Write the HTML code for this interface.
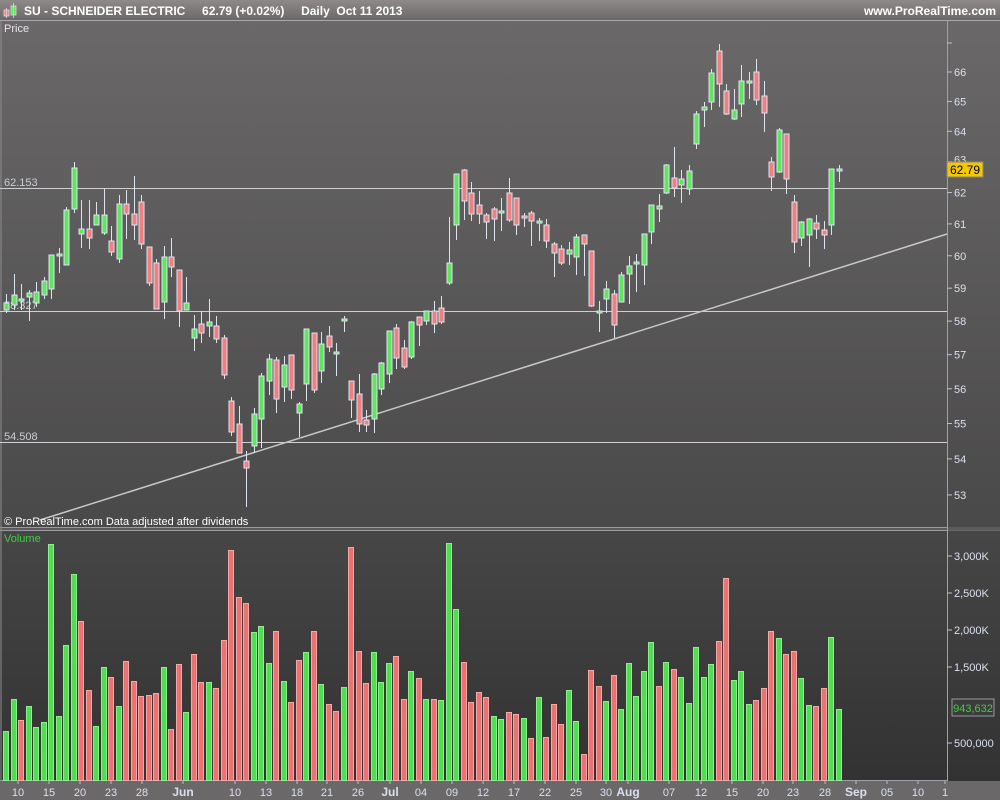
<!DOCTYPE html>
<html><head><meta charset="utf-8"><style>
html,body{margin:0;padding:0;background:#5a5858;}
svg{display:block;font-family:"Liberation Sans",sans-serif;}
</style></head><body>
<svg id="s" width="1000" height="800" xmlns="http://www.w3.org/2000/svg">
<defs>
<linearGradient id="gp" x1="0" y1="0" x2="0" y2="1"><stop offset="0" stop-color="#6a6868"/><stop offset="1" stop-color="#4a4949"/></linearGradient>
<linearGradient id="gv" x1="0" y1="0" x2="0" y2="1"><stop offset="0" stop-color="#474646"/><stop offset="1" stop-color="#333232"/></linearGradient>
<linearGradient id="gh" x1="0" y1="0" x2="0" y2="1"><stop offset="0" stop-color="#8e8a8a"/><stop offset="1" stop-color="#6c6868"/></linearGradient>
</defs>
<rect x="0" y="0" width="1000" height="800" fill="#6a6868"/>
<rect x="0" y="0" width="1000" height="20" fill="url(#gh)"/>
<line x1="0" y1="20.5" x2="1000" y2="20.5" stroke="#a8a8b0"/>
<rect x="0" y="21" width="1000" height="506" fill="url(#gp)"/>
<rect x="0" y="527" width="1000" height="3" fill="#5c5a5a"/>
<line x1="0" y1="527.5" x2="947" y2="527.5" stroke="#9a9aa0"/>
<line x1="0" y1="530.5" x2="947" y2="530.5" stroke="#9a9aa0"/>
<rect x="0" y="531" width="1000" height="250" fill="url(#gv)"/>
<rect x="0" y="781" width="1000" height="19" fill="#6a6868"/>
<line x1="0" y1="780.5" x2="947" y2="780.5" stroke="#a0a0a8"/>
<line x1="947.5" y1="21" x2="947.5" y2="781" stroke="#a0a0a8"/>
<line x1="1" y1="21" x2="1" y2="781" stroke="#8c8c90"/>
<rect x="4" y="10" width="5" height="6" fill="#f08080" stroke="#ddd" stroke-width="0.8"/>
<line x1="6.5" y1="8" x2="6.5" y2="18" stroke="#ddd" stroke-width="0.8"/>
<rect x="11" y="6" width="5" height="9" fill="#5ee65e" stroke="#ddd" stroke-width="0.8"/>
<line x1="13.5" y1="3" x2="13.5" y2="18" stroke="#ddd" stroke-width="0.8"/>
<text x="24" y="15" fill="#fff" font-size="12" font-weight="bold" xml:space="preserve">SU - SCHNEIDER ELECTRIC     62.79 (+0.02%)     Daily  Oct 11 2013</text>
<text x="996" y="15" fill="#fff" font-size="12" font-weight="bold" text-anchor="end">www.ProRealTime.com</text>
<text x="4" y="32" fill="#e6e6ea" font-size="11">Price</text>
<text x="4" y="542" fill="#44cc44" font-size="11">Volume</text>
<g id="hl" stroke="#d0d0d4" stroke-width="1"></g>
<line x1="40" y1="520" x2="947" y2="234" stroke="#c8c8c8" stroke-width="1.5"/>
<text x="4" y="186" fill="#c8ccd4" font-size="11">62.153</text>
<text x="4" y="309" fill="#c8ccd4" font-size="11">58.327</text>
<text x="4" y="440" fill="#c8ccd4" font-size="11">54.508</text>
<g id="c"></g>
<g id="v"></g>
<g id="ax" fill="#d8e0f0" font-size="11"></g>
<text x="4" y="525" fill="#fff" font-size="11">© ProRealTime.com  Data adjusted after dividends</text>
<rect x="947" y="162" width="36" height="15" fill="#f5c800" stroke="#888"/>
<text x="965" y="174" fill="#000" font-size="12" text-anchor="middle">62.79</text>
<rect x="952" y="699" width="42" height="17" fill="#3c3c3c" stroke="#999"/>
<text x="973" y="712" fill="#44cc44" font-size="11" text-anchor="middle">943,632</text>
</svg>
<script>
var NS="http://www.w3.org/2000/svg";
function el(p,t,a,txt){var e=document.createElementNS(NS,t);for(var k in a)e.setAttribute(k,a[k]);if(txt!=null)e.textContent=txt;p.appendChild(e);return e;}
var hl=document.getElementById('hl');
[188,311,442].forEach(function(y){el(hl,'line',{x1:0,y1:y+0.5,x2:947,y2:y+0.5});});
var C=[
[294,303,310,313,'g'],[274,295,305,310,'g'],[284,299,301,310,'g'],[290,293,297,321,'g'],[282,292,303,307,'g'],[277,281,295,299,'g'],
[255,255,289,299,'g'],[248,254,256,273,'g'],[207,210,265,265,'g'],[162,168,209,213,'g'],[200,229,234,248,'g'],[200,229,238,249,'r'],
[202,215,225,225,'g'],[189,215,233,235,'g'],[226,241,252,256,'r'],[195,204,259,263,'g'],[190,204,214,239,'r'],[176,214,225,240,'r'],
[195,202,244,249,'r'],[247,247,283,286,'r'],[259,263,309,309,'r'],[246,257,302,319,'g'],[238,257,267,277,'r'],[270,270,311,327,'r'],
[277,303,310,310,'g'],[315,329,338,351,'g'],[311,324,333,343,'r'],[299,322,326,337,'g'],[316,326,339,343,'r'],[335,338,375,379,'r'],
[397,401,432,436,'r'],[406,424,453,453,'r'],[451,461,468,507,'r'],[408,414,446,453,'g'],[373,376,419,448,'g'],[354,359,381,395,'g'],
[357,360,399,413,'r'],[356,365,387,402,'g'],[355,355,390,399,'r'],[402,404,413,437,'g'],[329,329,384,401,'g'],[333,333,390,393,'r'],
[332,344,371,383,'g'],[326,336,347,352,'r'],[343,352,354,376,'g'],[316,319,321,332,'g'],[381,381,400,418,'r'],[374,394,424,432,'r'],
[410,420,425,432,'r'],[373,374,419,433,'g'],[362,363,389,395,'g'],[331,331,374,383,'g'],[324,328,358,369,'r'],[340,348,367,369,'r'],
[321,322,357,359,'g'],[317,317,325,346,'r'],[311,311,321,325,'g'],[301,311,324,333,'r'],[296,308,322,324,'r'],[217,263,283,285,'g'],
[174,174,225,240,'g'],[169,170,201,220,'r'],[182,193,214,221,'r'],[191,205,214,224,'r'],[213,215,222,239,'r'],[207,209,219,241,'r'],
[198,211,213,231,'g'],[178,193,220,222,'r'],[198,198,225,235,'r'],[213,216,218,227,'r'],[211,213,221,246,'r'],[218,221,223,241,'g'],
[219,225,241,248,'r'],[242,244,253,277,'r'],[245,249,263,265,'r'],[242,250,254,265,'g'],[234,237,257,275,'g'],[235,235,244,276,'r'],
[251,251,306,307,'r'],[301,311,313,332,'g'],[281,289,299,313,'g'],[290,294,325,338,'r'],[272,275,302,302,'g'],[256,266,274,304,'g'],
[254,262,264,292,'g'],[234,234,265,285,'g'],[205,205,232,244,'g'],[194,206,209,222,'g'],[164,165,193,194,'g'],[147,178,188,197,'r'],
[170,179,185,203,'g'],[165,171,189,195,'g'],[111,114,144,149,'g'],[102,107,110,127,'g'],[69,73,102,110,'g'],[44,51,84,107,'r'],
[84,91,114,115,'r'],[89,110,119,120,'g'],[65,81,104,117,'g'],[72,81,83,99,'g'],[59,72,100,105,'r'],[81,96,113,132,'r'],
[157,162,177,191,'r'],[128,130,172,173,'g'],[134,134,179,194,'r'],[195,202,242,253,'r'],[221,222,238,246,'g'],[218,219,235,267,'g'],
[215,223,229,239,'r'],[221,230,235,249,'r'],[169,169,225,235,'g'],[165,169,171,182,'g']];
var V=[731,699,720,706,727,722,544,716,645,574,621,690,726,667,677,706,661,681,696,695,693,667,729,664,712,654,682,682,688,640,550,597,603,632,626,663,631,681,702,660,652,631,684,704,711,687,547,651,683,652,682,663,656,699,671,678,699,699,700,543,609,662,702,692,697,716,719,
712,714,718,738,697,737,704,724,690,721,754,670,686,701,675,709,663,696,671,642,686,662,669,677,703,647,677,664,641,578,680,671,704,700,688,631,638,654,651,678,705,706,688,637,709];
var VC=("ggrgggggggrrggrgrrrrrgrrgrrgrrrrrgggrgrrgrgrrgrrrgggrrgrgrgggrrrrgg"+
"rrgrgrrrggrrrgrgggggrgrgggggrrgggrrrgrrggrrgg");
var cg=document.getElementById('c'),vg=document.getElementById('v');
for(var i=0;i<C.length;i++){
 var x=Math.round(6+7.5*i)+0.5,d=C[i];
 el(cg,'line',{x1:x,y1:d[0],x2:x,y2:d[3],stroke:'#dde4f0','stroke-width':1});
 var h=Math.max(d[2]-d[1],2);
 el(cg,'rect',{x:x-2.5,y:d[1],width:5,height:h,fill:d[4]=='g'?'#5ee65e':'#f08080',stroke:'#dde4f0','stroke-width':1});
}
for(var i=0;i<V.length;i++){
 var x=Math.round(6+7.5*i),c=(VC[i]||'g')=='g';
 el(vg,'rect',{x:x-3+0.5,y:V[i]+0.5,width:5,height:780-V[i],fill:c?'#52dc52':'#ec7272',stroke:c?'#8cf08c':'#f4a8a8','stroke-width':1});
}
var ax=document.getElementById('ax');
function py(p){return 72+1928*(Math.log(66)-Math.log(p));}
for(var p=53;p<=67;p++){var y=py(p);el(ax,'line',{x1:947,y1:y,x2:952,y2:y,stroke:'#c0c0c8'});if(p<67&&p!=63)el(ax,'text',{x:954,y:y+4},String(p));}
el(ax,'text',{x:954,y:py(63)+2},'63');
[[556,'3,000K'],[593,'2,500K'],[630,'2,000K'],[667,'1,500K'],[743,'500,000']].forEach(function(a){el(ax,'line',{x1:947,y1:a[0],x2:952,y2:a[0],stroke:'#c0c0c8'});el(ax,'text',{x:954,y:a[0]+4},a[1]);});
var L=[[18,'10'],[49,'15'],[80,'20'],[111,'23'],[142,'28'],[183,'Jun',1],[235,'10'],[266,'13'],[297,'18'],[327,'21'],[358,'26'],[390,'Jul',1],[421,'04'],[452,'09'],[483,'12'],[514,'17'],[545,'22'],[576,'25'],[606,'30'],[628,'Aug',1],[669,'07'],[701,'12'],[732,'15'],[763,'20'],[793,'23'],[825,'28'],[856,'Sep',1],[887,'05'],[918,'10'],[945,'1']];
L.forEach(function(a){el(ax,'line',{x1:a[0],y1:781,x2:a[0],y2:784,stroke:'#c0c0c8'});var t=el(ax,'text',{x:a[0],y:796,'text-anchor':'middle','font-size':a[2]?12:11},a[1]);if(a[2])t.setAttribute('font-weight','bold');});
</script>
</body></html>
